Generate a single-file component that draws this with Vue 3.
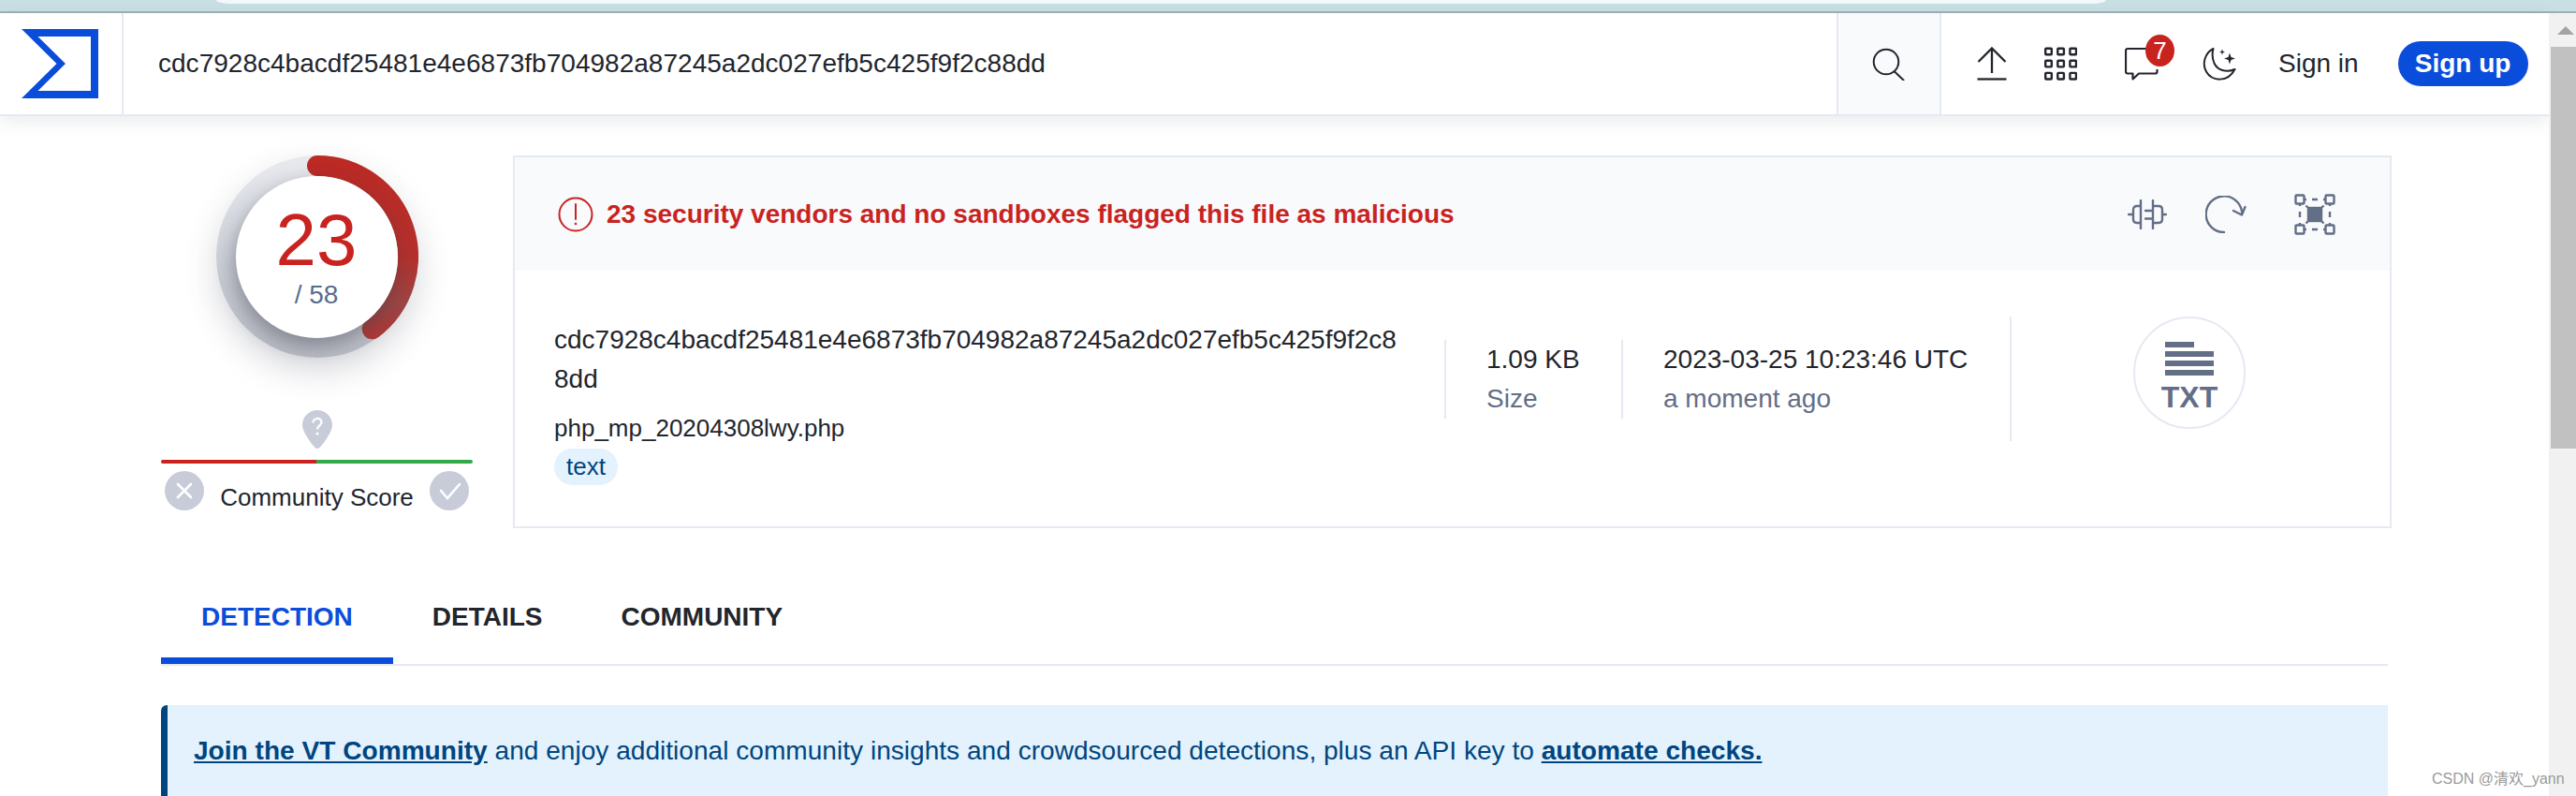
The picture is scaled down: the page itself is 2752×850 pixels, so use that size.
<template>
  <div class="page">
    <div class="browser-strip"><div class="browser-tab"></div></div>
    <div class="viewport">
      <div class="main">
        <header class="nav">
          <a class="logo-cell">
            <svg width="82" height="74" viewBox="0 0 82 74"><path d="M0 0H82V74H0L37.500 37Z M17.500 8L47 37L17.500 66H74V8Z" fill="#0b4ddb" fill-rule="evenodd"/></svg>
          </a>
          <div class="search-text">{{ hash }}</div>
          <div class="search-btn">
            <svg width="36" height="36" viewBox="0 0 36 36" fill="none" stroke="#22252c" stroke-width="2"><circle cx="15" cy="16" r="13.300"/><path d="M24 26.500L33.500 35.500" stroke-linecap="round"/></svg>
          </div>
          <div class="nav-tools">
            <svg class="tool-upload" width="32" height="36" viewBox="0 0 32 36" fill="none" stroke="#22252c" stroke-width="2.300"><path d="M16 28V1.500M1.500 16L16 1.500L30.500 16"/><path d="M0.500 34.500H31.500"/></svg>
            <svg class="tool-grid" width="35" height="36" viewBox="0 0 35 36" fill="none" stroke="#22252c" stroke-width="2.400">
              <rect v-for="cell in gridCells" :key="cell.key" :x="cell.x" :y="cell.y" width="6.600" height="6.600" rx="0.800"/>
            </svg>
            <div class="tool-chat">
              <svg width="36" height="36" viewBox="0 0 36 36" fill="none" stroke="#22252c" stroke-width="2.200" stroke-linejoin="round"><path d="M24 2H3Q1 2 1 4V26.500Q1 28.500 3 28.500H8.500V34.500L15 28.500H32.500Q34.500 28.500 34.500 26.500V24"/></svg>
              <span class="badge">7</span>
            </div>
            <svg class="tool-moon" width="36" height="36" viewBox="0 0 36 36" fill="none" stroke="#22252c" stroke-width="2"><path d="M11.500 2C3 6 -1 18 4 26.500C10 37 27 38.500 34.500 24C25 28 16 25 12.500 17.500C10.500 12.500 10 7 11.500 2Z" stroke-linejoin="round"/><path d="M29 6.500L30.500 11L35 12.500L30.500 14L29 18.500L27.500 14L23 12.500L27.500 11Z" fill="#22252c" stroke="none"/><path d="M21 2.500L21.800 4.700L24 5.500L21.800 6.300L21 8.500L20.200 6.300L18 5.500L20.200 4.700Z" fill="#22252c" stroke="none"/></svg>
            <span class="sign-in">Sign in</span>
            <span class="sign-up">Sign up</span>
          </div>
        </header>

        <section class="content">
          <div class="report">
            <aside class="score-col">
              <div class="gauge">
                <svg class="gauge-ring" width="216" height="216" viewBox="0 0 216 216" fill="none">
                  <defs>
                    <linearGradient id="ringGrey" x1="0" y1="0" x2="0" y2="1">
                      <stop offset="0" stop-color="#e6e8ed"/>
                      <stop offset="0.5" stop-color="#cdd0d8"/>
                      <stop offset="1" stop-color="#b9bcc4"/>
                    </linearGradient>
                    <linearGradient id="ringRed" x1="0" y1="0" x2="0" y2="1">
                      <stop offset="0" stop-color="#bb2a25"/>
                      <stop offset="0.55" stop-color="#b5302c"/>
                      <stop offset="0.85" stop-color="#9c4645"/>
                      <stop offset="1" stop-color="#aa3a38"/>
                    </linearGradient>
                  </defs>
                  <circle cx="108" cy="108" r="97" stroke="url(#ringGrey)" stroke-width="22"/>
                  <path :d="arcPath" stroke="url(#ringRed)" stroke-width="22" stroke-linecap="round"/>
                </svg>
                <div class="gauge-face">
                  <div class="gauge-value">23</div>
                  <div class="gauge-total">/ 58</div>
                </div>
              </div>
              <svg class="pin" width="32" height="41" viewBox="0 0 32 41"><path d="M16 0C7 0 0 7 0 16C0 23 9 35 13.500 40Q16 42 18.500 40C23 35 32 23 32 16C32 7 25 0 16 0Z" fill="#c7ccd8"/><path d="M11.500 13.500C11.500 7.500 20.500 7.500 20.500 13C20.500 16.500 16 16.500 16 20.500" fill="none" stroke="#fff" stroke-width="2.300"/><circle cx="16" cy="25" r="1.600" fill="#fff"/></svg>
              <div class="vote-bar"></div>
              <div class="vote-row">
                <span class="vote-btn">
                  <svg width="42" height="42" viewBox="0 0 42 42" fill="none" stroke="#fff" stroke-width="2.600" stroke-linecap="round"><path d="M14 14L28 28M28 14L14 28"/></svg>
                </span>
                <span class="vote-label">Community Score</span>
                <span class="vote-btn">
                  <svg width="41" height="41" viewBox="0 0 41 41" fill="none" stroke="#fff" stroke-width="2.600" stroke-linecap="round"><path d="M11 20L18 28L31 13"/></svg>
                </span>
              </div>
            </aside>

            <div class="card">
              <div class="card-head">
                <svg class="alert-icon" width="38" height="38" viewBox="0 0 38 38" fill="none" stroke="#c9231f" stroke-width="2"><circle cx="19" cy="19" r="17.500"/><path d="M19 8V24" stroke-linecap="round"/><circle cx="19" cy="29" r="1.300" fill="#c9231f" stroke="none"/></svg>
                <span class="alert-text">23 security vendors and no sandboxes flagged this file as malicious</span>
                <div class="head-actions">
                  <svg width="42" height="32" viewBox="0 0 42 32" fill="none" stroke="#636e87" stroke-width="2.400" stroke-linecap="round"><path d="M14 1V31M27 1V31M14 7H10Q6 7 6 11V21Q6 25 10 25H14M6 16H1M27 7H33Q37 7 37 11V21Q37 25 33 25H27M37 16H41M19 12H27M19 20.500H27"/></svg>
                  <svg class="act-refresh" width="44" height="40" viewBox="0 0 44 40" fill="none" stroke="#636e87" stroke-width="2.400" stroke-linecap="round" stroke-linejoin="round"><path d="M20 39A19.300 19.300 0 1 1 39.200 18"/><path d="M30 16L39 20.500L42.500 12"/></svg>
                  <svg class="act-graph" width="44" height="44" viewBox="0 0 44 44" fill="none" stroke="#636e87" stroke-width="2.400"><rect x="1.500" y="1.500" width="9" height="9" rx="1"/><rect x="33.500" y="1.500" width="9" height="9" rx="1"/><rect x="1.500" y="33.500" width="9" height="9" rx="1"/><rect x="33.500" y="33.500" width="9" height="9" rx="1"/><rect x="15" y="15" width="14" height="14" fill="#636e87"/><path d="M19 6H25M19 38H25M6 19V25M38 19V25M12.500 12.500L15 15M31.500 12.500L29 15M12.500 31.500L15 29M31.500 31.500L29 29M11 6H13M31 6H33M11 38H13M31 38H33M6 11V13M6 31V33M38 11V13M38 31V33"/></svg>
                </div>
              </div>
              <div class="card-body">
                <div class="file-col">
                  <div class="file-hash">{{ hash }}</div>
                  <div class="file-name">php_mp_20204308lwy.php</div>
                  <span class="file-tag">text</span>
                </div>
                <div class="meta meta-size">
                  <div class="meta-value">1.09 KB</div>
                  <div class="meta-label">Size</div>
                </div>
                <div class="meta meta-date">
                  <div class="meta-value">2023-03-25 10:23:46 UTC</div>
                  <div class="meta-label">a moment ago</div>
                </div>
                <div class="type-col">
                  <div class="type-circle">
                    <span class="type-line short"></span>
                    <span class="type-line"></span>
                    <span class="type-line"></span>
                    <span class="type-line"></span>
                    <span class="type-name">TXT</span>
                  </div>
                </div>
              </div>
            </div>
          </div>

          <nav class="tabs">
            <a v-for="tab in tabs" :key="tab" class="tab" :class="{ active: tab === 'DETECTION' }">{{ tab }}</a>
          </nav>

          <div class="banner">
            <a class="banner-link">Join the VT Community</a> and enjoy additional community insights and crowdsourced detections, plus an API key to <a class="banner-link">automate checks.</a>
          </div>
        </section>
      </div>

      <div class="scrollbar">
        <div class="scroll-up"></div>
        <div class="scroll-thumb"></div>
      </div>
    </div>
    <div class="watermark">CSDN @清欢_yann</div>
  </div>
</template>

<script setup>
const hash = 'cdc7928c4bacdf25481e4e6873fb704982a87245a2dc027efb5c425f9f2c88dd'
const tabs = ['DETECTION', 'DETAILS', 'COMMUNITY']

const gridCells = []
for (let row = 0; row < 3; row++) {
  for (let col = 0; col < 3; col++) {
    gridCells.push({ key: row + '-' + col, x: 1.2 + col * 13.1, y: 1.7 + row * 13.1 })
  }
}

// 23 of 58 vendors, clockwise from twelve o'clock
const angle = (23 / 58) * Math.PI * 2
const endX = (108 + 97 * Math.sin(angle)).toFixed(2)
const endY = (108 - 97 * Math.cos(angle)).toFixed(2)
const arcPath = `M108 11A97 97 0 0 1 ${endX} ${endY}`
</script>

<style>
html, body {
  margin: 0;
  overflow: hidden;
  background: #fff;
}
</style>

<style scoped>
.page {
  position: relative;
  width: 2752px;
  height: 850px;
  overflow: hidden;
  display: flex;
  flex-direction: column;
  font-family: "Liberation Sans", Arial, sans-serif;
  color: #22252c;
  background: #fff;
}

.browser-strip {
  flex: none;
  height: 12px;
  background: #c8dfe3;
  border-bottom: 2px solid #9fb0b3;
  padding: 0 502px 0 231px;
}

.browser-tab {
  height: 4px;
  background: #f3f8f9;
  border-radius: 0 0 16px 16px / 0 0 4px 4px;
}

.viewport {
  flex: 1;
  min-height: 0;
  display: flex;
}

.main {
  flex: 1;
  min-width: 0;
}

.nav {
  height: 108px;
  display: flex;
  align-items: stretch;
  background: #fff;
  border-bottom: 2px solid #e5e9f2;
  box-shadow: 0 6px 18px rgba(90, 100, 120, 0.12);
  position: relative;
}

.logo-cell {
  flex: none;
  width: 132px;
  box-sizing: border-box;
  border-right: 2px solid #e5e9f2;
  padding-left: 23px;
  display: flex;
  align-items: center;
}

.search-text {
  flex: 1;
  display: flex;
  align-items: center;
  padding-left: 37px;
  font-size: 28px;
  letter-spacing: 0.02px;
}

.search-btn {
  flex: none;
  width: 112px;
  box-sizing: border-box;
  display: flex;
  align-items: center;
  justify-content: center;
  background: #f9fafc;
  border-left: 2px solid #e5e9f2;
  border-right: 2px solid #e5e9f2;
}

.nav-tools {
  flex: none;
  width: 649px;
  display: flex;
  align-items: center;
  padding-left: 38px;
  box-sizing: border-box;
}

.tool-grid {
  margin-left: 40px;
}

.tool-chat {
  position: relative;
  margin-left: 51px;
  height: 36px;
}

.badge {
  position: absolute;
  left: 22px;
  top: -13px;
  width: 31px;
  height: 34px;
  border-radius: 50%;
  background: #c9231f;
  color: #fff;
  font-size: 26px;
  line-height: 34px;
  text-align: center;
}

.tool-moon {
  margin-left: 47px;
}

.sign-in {
  margin-left: 45px;
  font-size: 28px;
}

.sign-up {
  margin-left: 42px;
  width: 139px;
  height: 48px;
  border-radius: 24px;
  background: #0b4ddb;
  color: #fff;
  font-size: 28px;
  font-weight: 700;
  line-height: 48px;
  text-align: center;
}

.content {
  padding: 42px 172px 0;
}

.report {
  display: flex;
  align-items: flex-start;
  gap: 43px;
}

.score-col {
  width: 333px;
  flex: none;
  display: flex;
  flex-direction: column;
  align-items: center;
}

.gauge {
  position: relative;
  width: 216px;
  height: 216px;
  border-radius: 50%;
  box-shadow: 0 14px 34px rgba(70, 75, 90, 0.22);
}

.gauge-ring {
  display: block;
}

.gauge-face {
  position: absolute;
  left: 21px;
  top: 22px;
  width: 173px;
  height: 173px;
  border-radius: 50%;
  background: #fff;
  box-shadow: -2px 8px 20px rgba(50, 55, 70, 0.42);
  text-align: center;
}

.gauge-value {
  margin-top: 25px;
  font-size: 78px;
  line-height: 86px;
  color: #c9231f;
}

.gauge-total {
  font-size: 28px;
  line-height: 32px;
  color: #5a6d8c;
}

.pin {
  margin-top: 56px;
}

.vote-bar {
  margin-top: 12px;
  width: 100%;
  height: 4px;
  border-radius: 2px;
  background: linear-gradient(to right, #c9231f 50%, #34a84a 50%);
}

.vote-row {
  width: 100%;
  display: flex;
  justify-content: space-between;
  padding: 8px 4px 0;
  box-sizing: border-box;
}

.vote-btn {
  width: 42px;
  height: 42px;
  border-radius: 50%;
  background: #c7ccd8;
  display: flex;
  align-items: center;
  justify-content: center;
}

.vote-label {
  font-size: 26px;
  line-height: 30px;
  padding-top: 13px;
}

.card {
  width: 2007px;
  flex: none;
  height: 398px;
  box-sizing: border-box;
  border: 2px solid #e5e9f2;
}

.card-head {
  height: 121px;
  background: #f9fafc;
  display: flex;
  align-items: center;
  padding-left: 46px;
}

.alert-icon {
  flex: none;
}

.alert-text {
  margin-left: 14px;
  font-size: 28px;
  font-weight: 700;
  color: #c9231f;
}

.head-actions {
  margin-left: auto;
  margin-right: 58px;
  display: flex;
  align-items: center;
}

.act-refresh {
  margin-left: 41px;
}

.act-graph {
  margin-left: 51px;
}

.card-body {
  display: flex;
  align-items: flex-start;
  padding-top: 48px;
}

.file-col {
  width: 902px;
  margin-left: 42px;
  flex: none;
  margin-top: 5px;
}

.file-hash {
  font-size: 28px;
  line-height: 42px;
  word-break: break-all;
}

.file-name {
  margin-top: 13px;
  font-size: 26px;
  line-height: 36px;
  white-space: nowrap;
}

.file-tag {
  display: block;
  width: fit-content;
  margin-top: 4px;
  padding: 0 13px;
  height: 39px;
  line-height: 39px;
  border-radius: 20px;
  background: #e3f2fd;
  color: #00457f;
  font-size: 26px;
}

.meta {
  margin-top: 26px;
  height: 84px;
  box-sizing: border-box;
  border-left: 2px solid #e5e9f2;
  padding-left: 43px;
  flex: none;
}

.meta-size {
  margin-left: 49px;
  width: 189px;
}

.meta-date {
  width: 415px;
}

.meta-value {
  font-size: 28px;
  line-height: 42px;
  white-space: nowrap;
}

.meta-label {
  font-size: 28px;
  line-height: 42px;
  color: #636e87;
  white-space: nowrap;
}

.type-col {
  flex: 1;
  margin-top: 1px;
  height: 133px;
  border-left: 2px solid #e5e9f2;
  padding-left: 130px;
  display: flex;
}

.type-circle {
  width: 120px;
  height: 120px;
  box-sizing: border-box;
  border: 2px solid #e5e9f2;
  border-radius: 50%;
  padding-top: 25px;
  display: flex;
  flex-direction: column;
  align-items: center;
  gap: 4px;
}

.type-line {
  flex: none;
  width: 52px;
  height: 6px;
  background: #636e87;
}

.type-line.short {
  width: 31px;
  margin-right: 21px;
}

.type-name {
  margin-top: 4px;
  font-size: 32px;
  font-weight: 700;
  line-height: 30px;
  color: #636e87;
}

.tabs {
  margin-top: 41px;
  height: 104px;
  display: flex;
  border-bottom: 2px solid #e5e9f2;
}

.tab {
  height: 104px;
  box-sizing: border-box;
  padding: 38px 42px 0;
  font-size: 28px;
  font-weight: 700;
  line-height: 32px;
}

.tab.active {
  padding-left: 43px;
  padding-right: 43px;
  color: #0b4ddb;
  border-bottom: 7px solid #0b4ddb;
}

.banner {
  margin-top: 42px;
  height: 120px;
  box-sizing: border-box;
  background: #e3f2fd;
  border-left: 7px solid #00457f;
  border-radius: 6px 0 0 6px;
  padding: 31px 0 0 28px;
  font-size: 28.100px;
  line-height: 36px;
  color: #00457f;
}

.banner-link {
  font-weight: 700;
  text-decoration: underline;
}

.scrollbar {
  position: relative;
  width: 29px;
  flex: none;
  background: #f1f1f1;
}

.scroll-up {
  height: 36px;
  position: relative;
}

.scroll-up::after {
  content: "";
  position: absolute;
  left: 9px;
  top: 14px;
  border-left: 9px solid transparent;
  border-right: 9px solid transparent;
  border-bottom: 9px solid #a3a3a3;
}

.scroll-thumb {
  margin-left: 2px;
  height: 429px;
  background: #c1c1c1;
}

.watermark {
  position: absolute;
  left: 2598px;
  top: 822px;
  font-size: 16px;
  line-height: 20px;
  color: #9a9a9a;
  white-space: nowrap;
  font-family: "Liberation Sans", "Noto Sans CJK SC", sans-serif;
}
</style>
